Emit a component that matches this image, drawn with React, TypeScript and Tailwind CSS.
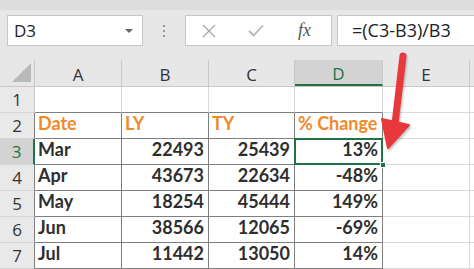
import React from 'react';

const cols = ['A', 'B', 'C', 'D', 'E'];
const widths = ['w-[87px]', 'w-[87px]', 'w-[86px]', 'w-[88px]', 'w-[87px]'];

const rows: (string | number)[][] = [
  ['Mar', 22493, 25439, '13%'],
  ['Apr', 43673, 22634, '-48%'],
  ['May', 18254, 45444, '149%'],
  ['Jun', 38566, 12065, '-69%'],
  ['Jul', 11442, 13050, '14%'],
];

const ui = { fontFamily: '"Open Sans", "Noto Sans", sans-serif' };
const cell = { fontFamily: 'Lato, "Liberation Sans", sans-serif' };

function RowHeader({ n, active, dark }: { n: number; active?: boolean; dark?: boolean }) {
  return (
    <div
      className={`w-[35px] h-[26px] shrink-0 flex items-center justify-center pt-[1px] text-[17px] border-b border-[#d4d4d4] ${
        active
          ? 'bg-[#d3d3d3] text-[#217346] border-r-2 border-r-[#217346]'
          : dark
          ? 'bg-[#e9e9e9] text-[#333] border-r border-r-[#7f7f7f]'
          : 'bg-[#e9e9e9] text-[#333] border-r border-r-[#c8c8c8]'
      }`}
      style={ui}
    >
      {n}
    </div>
  );
}

export default function App() {
  return (
    <div className="relative w-[474px] h-[269px] overflow-hidden bg-[#e7e7e7]">
      {/* formula bar */}
      <div className="h-[10px] bg-[#dddddd]" />
      <div className="flex h-[31px] mt-[5px]" style={ui}>
        <div className="ml-[7px] w-[136px] bg-white border border-[#c6c6c6] flex items-center justify-between pl-[6px] pr-[9px]">
          <span className="text-[17px] text-[#222]">D3</span>
          <span className="w-0 h-0 border-l-[4px] border-r-[4px] border-t-[4px] border-l-transparent border-r-transparent border-t-[#666]" />
        </div>
        <div className="w-[42px] flex flex-col items-center justify-center gap-[3px]">
          <span className="w-[2px] h-[2px] bg-[#999]" />
          <span className="w-[2px] h-[2px] bg-[#999]" />
          <span className="w-[2px] h-[2px] bg-[#999]" />
        </div>
        <div className="w-[147px] bg-white border border-[#c6c6c6] flex items-center">
          <svg width="14" height="14" viewBox="0 0 14 14" className="ml-[16px]">
            <path d="M1 1L13 13M13 1L1 13" stroke="#a8a8a8" strokeWidth="1.3" />
          </svg>
          <svg width="16" height="13" viewBox="0 0 16 13" className="ml-[32px]">
            <path d="M1 7L5.5 11.5L15 1.5" stroke="#b4b4b4" strokeWidth="1.8" fill="none" />
          </svg>
          <span className="ml-[34px] text-[18px] italic text-[#555]" style={{ fontFamily: '"Liberation Serif", serif' }}>
            fx
          </span>
        </div>
        <div className="ml-[5px] flex-1 bg-white border-y border-l border-[#c6c6c6] flex items-center pl-[14px]">
          <span className="text-[18px] text-[#222]">=(C3-B3)/B3</span>
        </div>
      </div>

      {/* column headers */}
      <div className="flex h-[26px] mt-[14px]" style={ui}>
        <div className="w-[35px] shrink-0 border-r border-[#c8c8c8] flex items-end justify-end pr-[3px] pb-[4px]">
          <svg width="19" height="19" viewBox="0 0 19 19">
            <path d="M19 0L19 19L0 19Z" fill="#b9b9b9" />
          </svg>
        </div>
        {cols.map((c, i) => (
          <div
            key={c}
            className={`${widths[i]} shrink-0 flex items-center justify-center pt-[3px] text-[17px] ${
              c === 'D'
                ? 'bg-[#d3d3d3] text-[#217346] border-b-2 border-[#217346] border-r border-r-[#c8c8c8]'
                : 'text-[#333] border-r border-[#c8c8c8]'
            }`}
          >
            {c}
          </div>
        ))}
        <div className="flex-1" />
      </div>

      {/* grid */}
      <div className="bg-white border-t border-[#c8c8c8]" style={cell}>
        {/* row 1 */}
        <div className="flex">
          <RowHeader n={1} />
          {cols.map((c, i) => (
            <div
              key={c}
              className={`${widths[i]} h-[26px] shrink-0 border-r border-[#d9d9d9] border-b ${
                i < 4 ? 'border-b-[#7f7f7f]' : 'border-b-[#d9d9d9]'
              }`}
            />
          ))}
          <div className="flex-1 border-b border-[#d9d9d9]" />
        </div>
        {/* row 2 headings */}
        <div className="flex">
          <RowHeader n={2} dark />
          {['Date', 'LY', 'TY', '% Change'].map((t, i) => (
            <div
              key={t}
              className={`${widths[i]} h-[26px] shrink-0 border-r border-b border-[#7f7f7f] flex items-end pl-[3px] pb-[1px] text-[18px] font-bold text-[#ef8a2b]`}
            >
              {t}
            </div>
          ))}
          <div className={`${widths[4]} h-[26px] shrink-0 border-r border-b border-[#d9d9d9]`} />
          <div className="flex-1 border-b border-[#d9d9d9]" />
        </div>
        {/* data rows */}
        {rows.map((r, ri) => (
          <div key={ri} className="flex">
            <RowHeader n={ri + 3} active={ri === 0} dark />
            {r.map((v, i) => (
              <div
                key={i}
                className={`${widths[i]} h-[26px] shrink-0 border-r border-b border-[#7f7f7f] flex items-end pb-[1px] text-[18px] font-bold text-[#2e2e2e] ${
                  i === 0 ? 'pl-[3px]' : 'justify-end pr-[4px]'
                } ${ri === 0 && i === 3 ? 'relative' : ''}`}
              >
                {v}
                {ri === 0 && i === 3 && (
                  <>
                    <div className="absolute -left-[1px] -top-[1px] -right-[1px] -bottom-[1px] border-2 border-[#217346]" />
                    <div className="absolute -right-[4px] -bottom-[4px] w-[6px] h-[6px] bg-[#217346] border border-white" />
                  </>
                )}
              </div>
            ))}
            <div className={`${widths[4]} h-[26px] shrink-0 border-r border-b border-[#d9d9d9]`} />
            <div className="flex-1 border-b border-[#d9d9d9]" />
          </div>
        ))}
      </div>

      {/* red arrow callout */}
      <svg
        className="absolute left-0 top-0 pointer-events-none"
        width="474"
        height="269"
        style={{ filter: 'drop-shadow(1px 2px 1px rgba(0,0,0,0.25))' }}
      >
        <path d="M403 56L395 124" stroke="#e8383c" strokeWidth="7" strokeLinecap="round" />
        <path d="M382 119L409 125L388 148Z" fill="#e8383c" stroke="#e8383c" strokeWidth="2" strokeLinejoin="round" />
      </svg>
    </div>
  );
}
